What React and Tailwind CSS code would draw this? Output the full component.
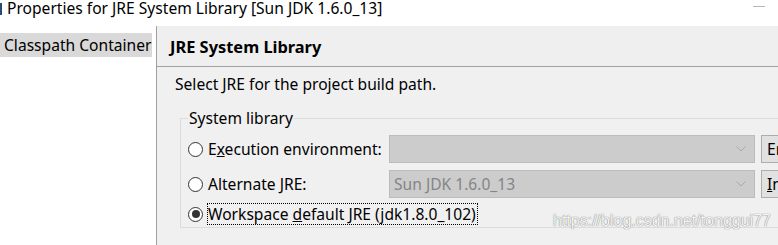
import React from "react";

function Radio({ checked }) {
  return (
    <span className="flex h-[15px] w-[15px] shrink-0 items-center justify-center rounded-full border border-[#333333] bg-white">
      {checked && <span className="h-[8px] w-[8px] rounded-full bg-[#333333]" />}
    </span>
  );
}

function Combo({ value }) {
  return (
    <div className="flex h-[28px] w-[366px] shrink-0 items-center justify-between border border-[#bcbcbc] bg-[#cccccc] pl-[4px] pr-[8px] text-[#858585]">
      <span>{value}</span>
      <svg width="10" height="6" viewBox="0 0 10 6" className="text-[#a8a8a8]">
        <path d="M0.5 0.5 L5 5 L9.5 0.5" fill="none" stroke="currentColor" strokeWidth="1" />
      </svg>
    </div>
  );
}

function Button({ children }) {
  return (
    <div className="flex h-[28px] w-[120px] shrink-0 items-center whitespace-nowrap border border-[#adadad] bg-[#e1e1e1] pl-[5px] text-black">
      {children}
    </div>
  );
}

export default function App() {
  return (
    <div className="relative h-[245px] w-[778px] overflow-hidden bg-white text-[15.6px] leading-[20px] text-black [font-family:'Noto_Sans',sans-serif]">
      <div className="relative flex h-[26px] items-start">
        <span className="mt-[3px] h-[12px] w-[2px] bg-[#2b4a6e]" />
        <span className="ml-[5px] whitespace-nowrap leading-[17px]">Properties for JRE System Library [Sun JDK 1.6.0_13]</span>
        <span className="absolute right-[13px] top-[6px] h-[1px] w-[12px] bg-[#b5b5b5]" />
      </div>

      <div className="flex h-[219px]">
        <div className="w-[157px] shrink-0 border-r border-[#a0a0a0] bg-white pt-[7px]">
          <div className="flex h-[24px] w-[152px] items-center whitespace-nowrap bg-[#d9d9d9] pl-[4px]">Classpath Container</div>
        </div>

        <div className="w-[720px] shrink-0 bg-[#f0f0f0]">
          <div className="flex h-[41px] items-center border-b border-[#a0a0a0] bg-[#efefef] pl-[13px] pt-[2px] text-[16.4px] font-bold">
            JRE System Library
          </div>
          <div className="pl-[18px] pt-[7px]">Select JRE for the project build path.</div>

          <fieldset className="ml-[23px] mt-[15px] h-[119px] w-[700px] border border-[#dcdcdc] pl-[7px]">
            <legend className="px-[1px] leading-[18px]">System library</legend>
            <div className="mt-[8px] flex h-[28px] items-center">
              <Radio />
              <span className="ml-[5px] w-[181px] whitespace-nowrap">
                E<span className="underline">x</span>ecution environment:
              </span>
              <Combo value="" />
              <div className="ml-[6px]">
                <Button>Environments...</Button>
              </div>
            </div>
            <div className="mt-[7px] flex h-[28px] items-center">
              <Radio />
              <span className="ml-[5px] w-[181px] whitespace-nowrap">
                Alternate <span className="underline">J</span>RE:
              </span>
              <Combo value="Sun JDK 1.6.0_13" />
              <div className="ml-[6px]">
                <Button>
                  <span className="underline">I</span>nstalled JREs...
                </Button>
              </div>
            </div>
            <div className="mt-[6px] flex h-[20px] items-center">
              <Radio checked />
              <span className="ml-[4px] whitespace-nowrap border border-dotted border-black pr-[1px]">
                Workspace <span className="underline">d</span>efault JRE (jdk1.8.0_102)
              </span>
            </div>
          </fieldset>
        </div>
      </div>

      <span className="absolute left-[553px] top-[211px] whitespace-nowrap text-[16px] text-[#f4f4f4] [font-family:'Liberation_Sans',sans-serif] [text-shadow:0_0_1px_#8a8a8a,0_0_1px_#8a8a8a]">
        https://blog.csdn.net/tonggui77
      </span>
    </div>
  );
}
